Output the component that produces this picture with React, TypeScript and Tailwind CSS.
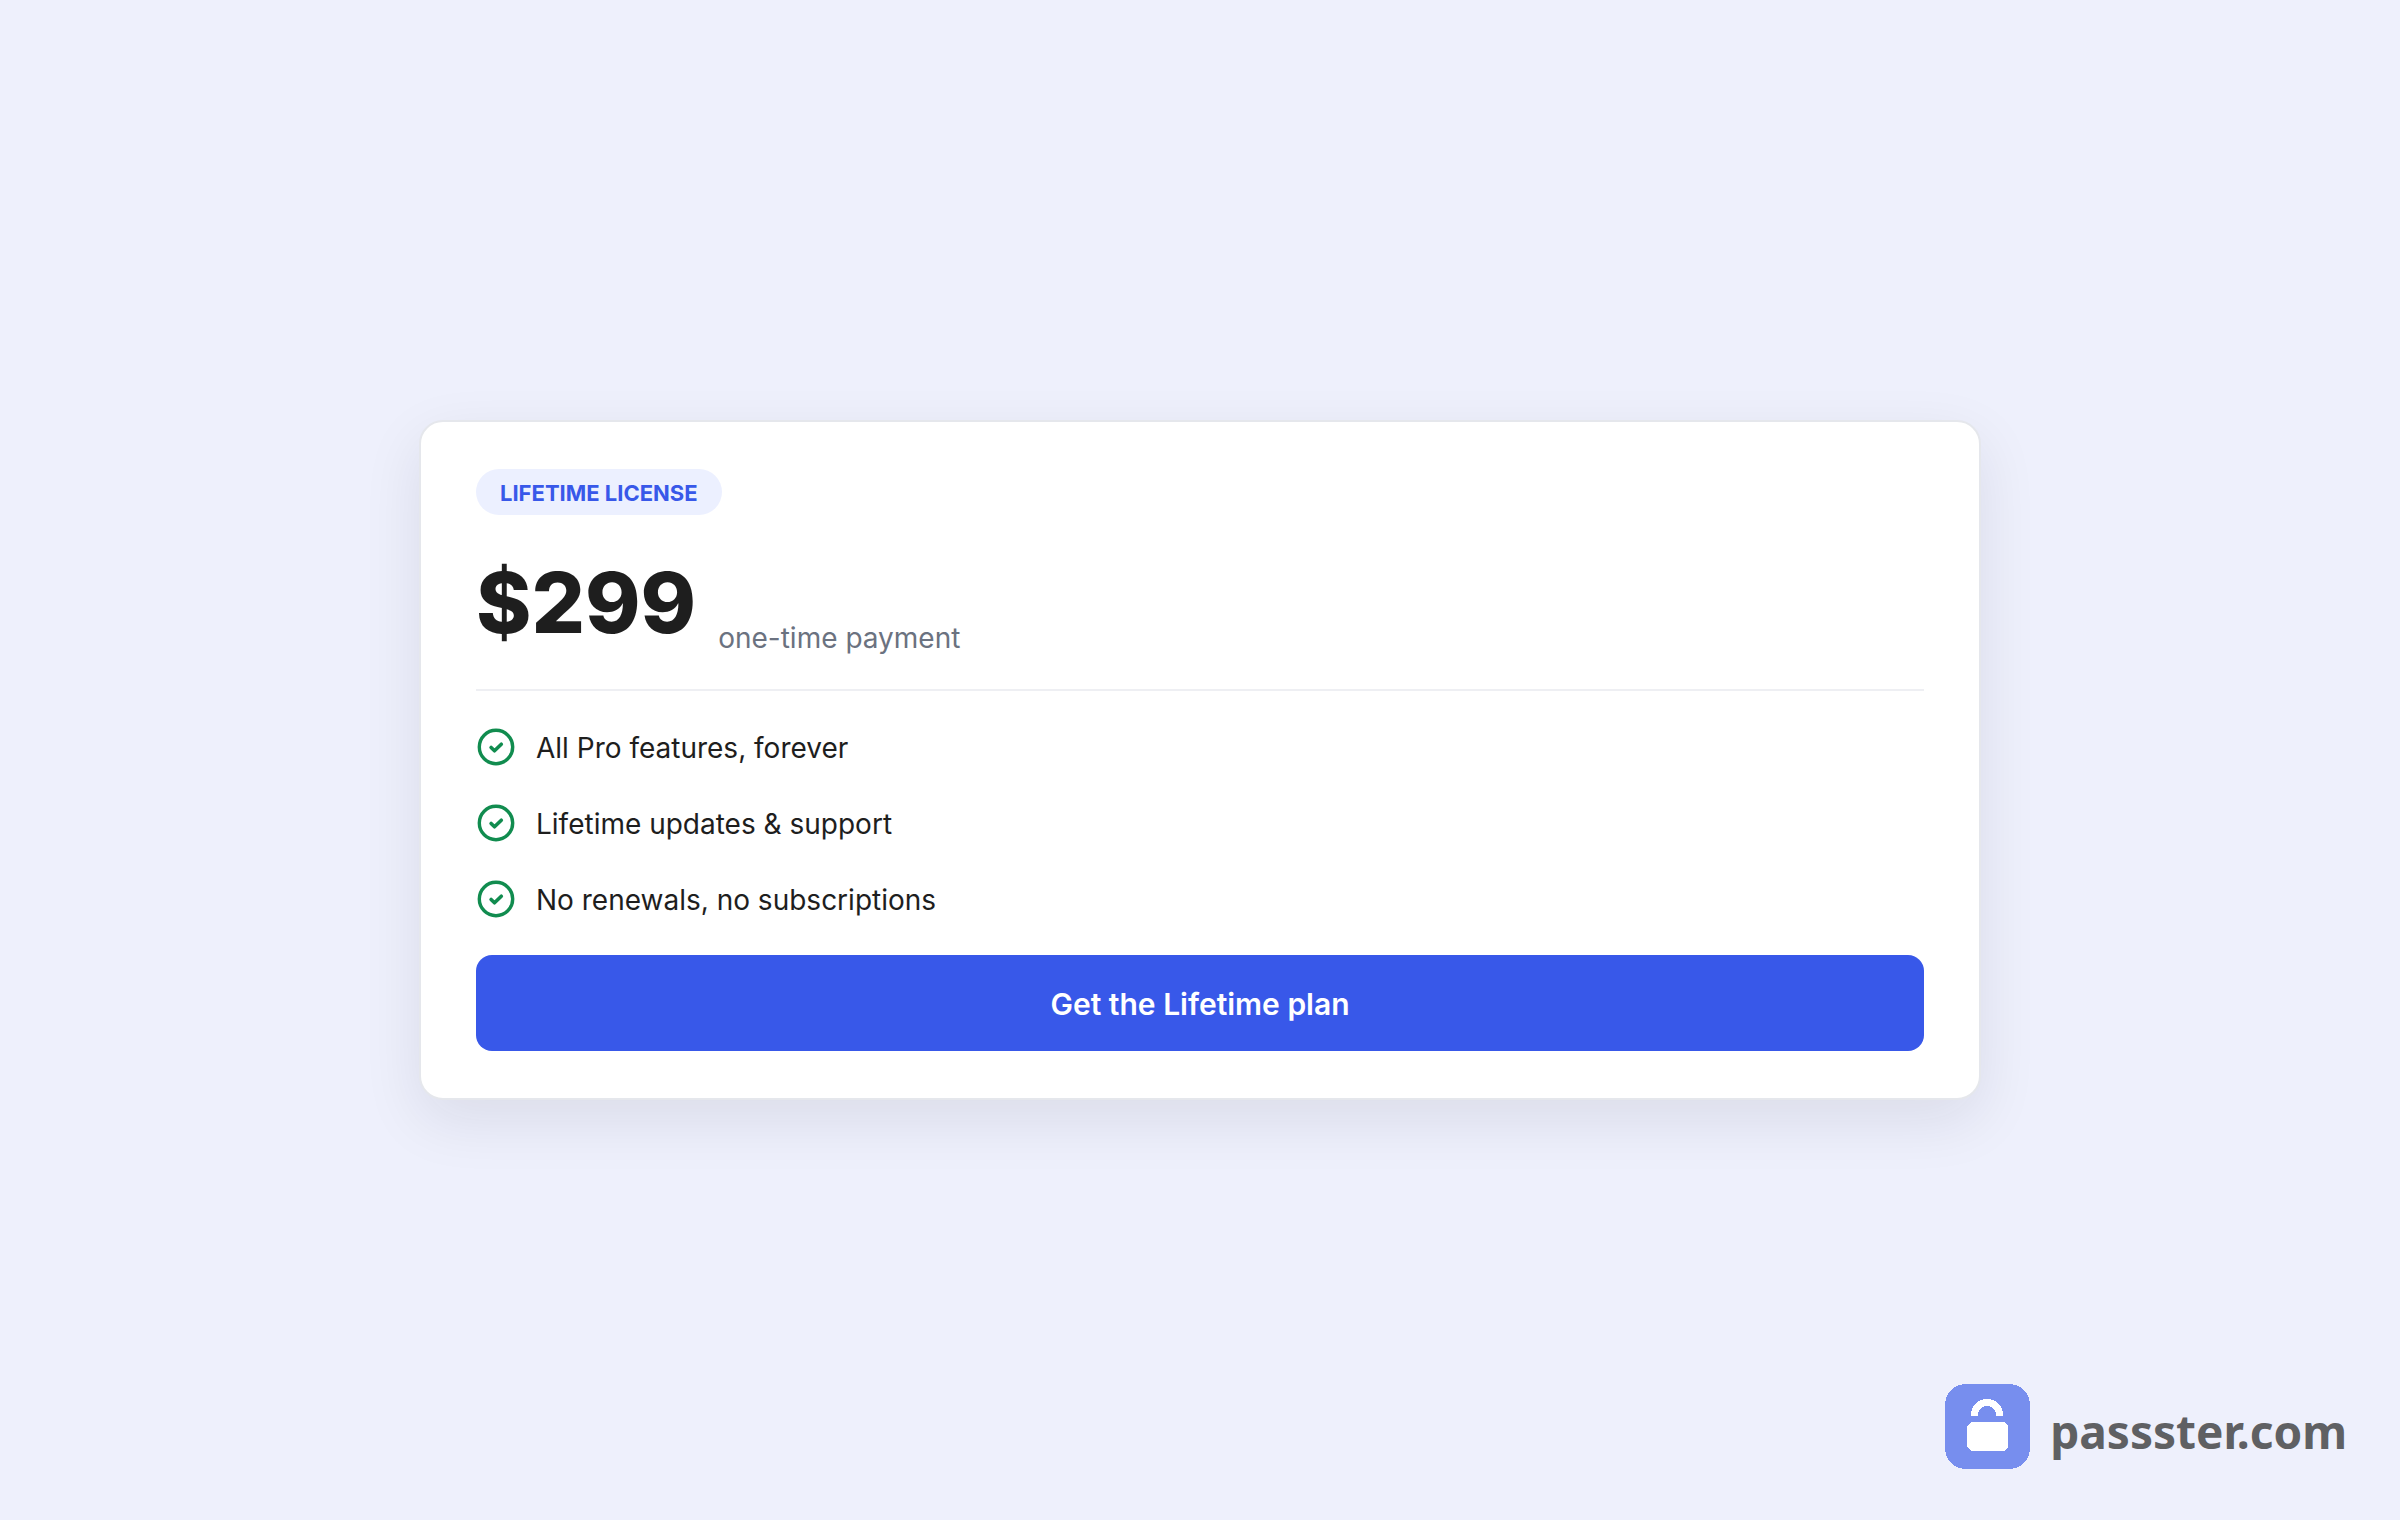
const features = [
  'All Pro features, forever',
  'Lifetime updates & support',
  'No renewals, no subscriptions',
]

function CheckIcon() {
  return (
    <svg
      viewBox="0 0 40 40"
      className="size-10 shrink-0 text-[#118c4f]"
      fill="none"
      stroke="currentColor"
      strokeLinecap="round"
      strokeLinejoin="round"
      aria-hidden="true"
    >
      <circle cx="20" cy="20" r="16.7" strokeWidth="3.4" />
      <path d="M15.1 20.4l3.4 3.4 6.8-6.6" strokeWidth="3.6" />
    </svg>
  )
}

function Brand() {
  return (
    <a href="https://passster.com" className="flex items-center gap-5 text-[#5f6063]">
      <svg viewBox="0 0 85 85" className="size-[85px]" shapeRendering="crispEdges" aria-hidden="true">
        <rect width="85" height="85" rx="21" fill="#778eee" />
        <path d="M26 32v-1a16 16 0 0 1 32 0v1h-7v-1a9 9 0 0 0-18 0v1z" fill="#fff" />
        <path d="M26 38h33l4 4v21l-4 4h-33l-4-4v-21z" fill="#fff" />
      </svg>
      <span className="pt-2 font-['Noto_Sans',sans-serif] text-[46px] leading-[64px] font-bold">passster.com</span>
    </a>
  )
}

function PricingCard() {
  return (
    <section className="w-full max-w-[1562px] rounded-[24px] border-2 border-[#e5e7ec] bg-white px-[55px] py-[47px] shadow-[0_20px_60px_rgba(17,24,39,0.09)]">
      <span className="inline-flex h-[46px] items-center rounded-full bg-[#ecf0ff] px-6 pt-0.5 text-[22px] font-bold text-[#3858e9]">
        LIFETIME LICENSE
      </span>

      <div className="mt-8 flex items-end gap-[22px]">
        <span className="text-[84px] leading-[112px] font-extrabold">$299</span>
        <span className="text-[28px] leading-[42px] text-[#6b7280]">one-time payment</span>
      </div>

      <hr className="mt-[30px] border-t-2 border-[#eeeff3]" />

      <ul className="mt-9 flex flex-col gap-9">
        {features.map((feature) => (
          <li key={feature} className="flex items-center gap-5 text-[28px] leading-[36px]">
            <CheckIcon />
            <span className="pt-0.5">{feature}</span>
          </li>
        ))}
      </ul>

      <button type="button" className="mt-9 h-24 w-full rounded-[16px] bg-[#3858e9] pt-0.5 text-[30px] font-semibold text-white">
        Get the Lifetime plan
      </button>
    </section>
  )
}

export default function App() {
  return (
    <div className="flex min-h-screen flex-col bg-[#eef0fc] font-['Inter',sans-serif] text-[#1e1e1e]">
      <main className="flex flex-1 items-center justify-center px-8 py-12">
        <PricingCard />
      </main>
      <footer className="absolute right-[53px] bottom-[51px]">
        <Brand />
      </footer>
    </div>
  )
}
